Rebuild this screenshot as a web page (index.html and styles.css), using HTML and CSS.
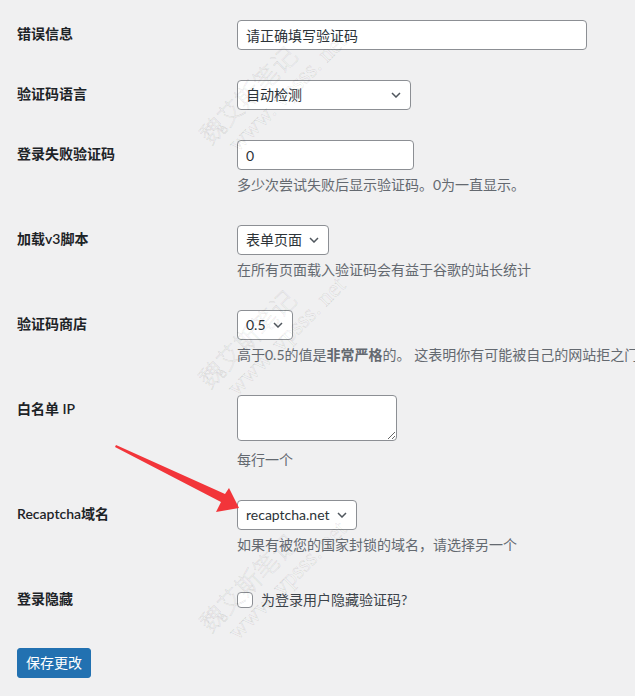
FILE: index.html
```html
<!DOCTYPE html>
<html lang="zh-CN">
<head>
<meta charset="utf-8">
<title>reCAPTCHA 设置</title>
<link rel="stylesheet" href="styles.css">
</head>
<body>
<div class="page">
  <div class="form-table">
    <div class="row">
      <div class="th">错误信息</div>
      <div class="td"><input class="input w-regular" type="text" value="请正确填写验证码"></div>
    </div>
    <div class="row">
      <div class="th">验证码语言</div>
      <div class="td"><select class="select w-lang"><option>自动检测</option></select></div>
    </div>
    <div class="row">
      <div class="th">登录失败验证码</div>
      <div class="td">
        <input class="input w-number" type="text" value="0">
        <p class="desc">多少次尝试失败后显示验证码。0为一直显示。</p>
      </div>
    </div>
    <div class="row">
      <div class="th">加载v3脚本</div>
      <div class="td">
        <select class="select"><option>表单页面</option></select>
        <p class="desc">在所有页面载入验证码会有益于谷歌的站长统计</p>
      </div>
    </div>
    <div class="row">
      <div class="th">验证码商店</div>
      <div class="td">
        <select class="select"><option>0.5</option></select>
        <p class="desc nowrap">高于0.5的值是<strong>非常严格</strong>的。 这表明你有可能被自己的网站拒之门外。</p>
      </div>
    </div>
    <div class="row">
      <div class="th">白名单 IP</div>
      <div class="td">
        <textarea class="textarea"></textarea>
        <p class="desc desc-gap">每行一个</p>
      </div>
    </div>
    <div class="row">
      <div class="th">Recaptcha域名</div>
      <div class="td">
        <select class="select"><option>recaptcha.net</option></select>
        <p class="desc">如果有被您的国家封锁的域名，请选择另一个</p>
      </div>
    </div>
    <div class="row">
      <div class="th">登录隐藏</div>
      <div class="td td-check">
        <label class="check-label"><input class="checkbox" type="checkbox">为登录用户隐藏验证码?</label>
      </div>
    </div>
  </div>
  <p class="submit"><button class="button-primary" type="button">保存更改</button></p>

  <svg class="arrow" width="635" height="696" viewBox="0 0 635 696" aria-hidden="true">
    <polygon points="116,445 225,494 229,488 239,508 216,512 221,502 115,447" fill="#f2353a"/>
  </svg>

  <div class="wm wm1"><span class="wm-cn">魏艾斯笔记</span><span class="wm-url">www. vpsss. net</span></div>
  <div class="wm wm2"><span class="wm-cn">魏艾斯笔记</span><span class="wm-url">www. vpsss. net</span></div>
  <div class="wm wm3"><span class="wm-cn">魏艾斯笔记</span><span class="wm-url">www. vpsss. net</span></div>
</div>
</body>
</html>
```

FILE: styles.css
```css
html, body {
  margin: 0;
  padding: 0;
  background: #f0f0f1;
  overflow: hidden;
}

body {
  font-family: Lato, "Noto Sans CJK SC", sans-serif;
  font-size: 14px;
  color: #3c434a;
}

.page {
  position: relative;
  width: 635px;
  height: 696px;
  padding: 5px 0 0 17px;
  box-sizing: border-box;
}

.form-table {
  display: flex;
  flex-direction: column;
}

.row {
  display: flex;
  align-items: flex-start;
}

.th {
  flex: none;
  width: 200px;
  padding: 20px 10px 20px 0;
  line-height: 18.2px;
  font-weight: 600;
  color: #1d2327;
}

.td {
  flex: 1;
  min-width: 0;
  padding: 15px 10px;
  line-height: 18.2px;
}

.td-check {
  padding-top: 20px;
}

.input,
.select,
.textarea {
  display: block;
  box-sizing: border-box;
  font-family: inherit;
  font-size: 14px;
  color: #2c3338;
  background-color: #fff;
  border: 1px solid #8c8f94;
  border-radius: 4px;
  margin: 0;
  outline: none;
}

.input {
  height: 30px;
  padding: 0 8px;
  line-height: 28px;
}

.w-regular { width: 350px; }
.w-number { width: 177px; }
.w-lang { width: 174px; }

.select {
  -webkit-appearance: none;
  appearance: none;
  height: 30px;
  padding: 0 26px 0 8px;
  line-height: 28px;
  background-image: url("data:image/svg+xml,%3Csvg xmlns='http://www.w3.org/2000/svg' width='10' height='6' viewBox='0 0 10 6'%3E%3Cpath d='M1 1 L5 5 L9 1' fill='none' stroke='%2350575e' stroke-width='1.5'/%3E%3C/svg%3E");
  background-repeat: no-repeat;
  background-position: right 9px center;
  background-size: 10px 6px;
}

.textarea {
  width: 160px;
  height: 46px;
  padding: 2px 6px;
  line-height: 1.4;
  resize: both;
}

.desc {
  margin: 4px 0 0;
  line-height: 21px;
  color: #646970;
}

.desc strong {
  font-weight: 600;
}

.desc-gap {
  margin-top: 8px;
}

.nowrap {
  white-space: nowrap;
}

.check-label {
  display: flex;
  align-items: center;
  color: #3c434a;
  line-height: 20px;
}

.checkbox {
  -webkit-appearance: none;
  appearance: none;
  flex: none;
  width: 16px;
  height: 16px;
  margin: 0 8px 0 0;
  border: 1px solid #8c8f94;
  border-radius: 4px;
  background: #fff;
  box-sizing: border-box;
}

.submit {
  margin: 20px 0 0;
  padding: 0;
}

.button-primary {
  height: 30px;
  padding: 0 8px;
  font-family: inherit;
  font-size: 14px;
  line-height: 28px;
  color: #fff;
  background: #2271b1;
  border: 1px solid #2271b1;
  border-radius: 3px;
  cursor: pointer;
}

.arrow {
  position: absolute;
  left: 0;
  top: 0;
  pointer-events: none;
}

.wm {
  position: absolute;
  display: flex;
  flex-direction: column;
  transform: rotate(-45deg);
  transform-origin: 0 0;
  pointer-events: none;
  white-space: nowrap;
  color: transparent;
  -webkit-text-stroke: 0.5px rgba(0, 0, 0, 0.13);
}

.wm-cn {
  font-family: "Noto Sans CJK SC", sans-serif;
  font-weight: 300;
  font-size: 25px;
  line-height: 28px;
}

.wm-url {
  font-family: "Liberation Serif", serif;
  font-size: 24px;
  line-height: 26px;
  margin-left: 14px;
}

.wm1 { left: 193px; top: 128px; }
.wm2 { left: 192px; top: 372px; }
.wm3 { left: 193px; top: 616px; }
```
